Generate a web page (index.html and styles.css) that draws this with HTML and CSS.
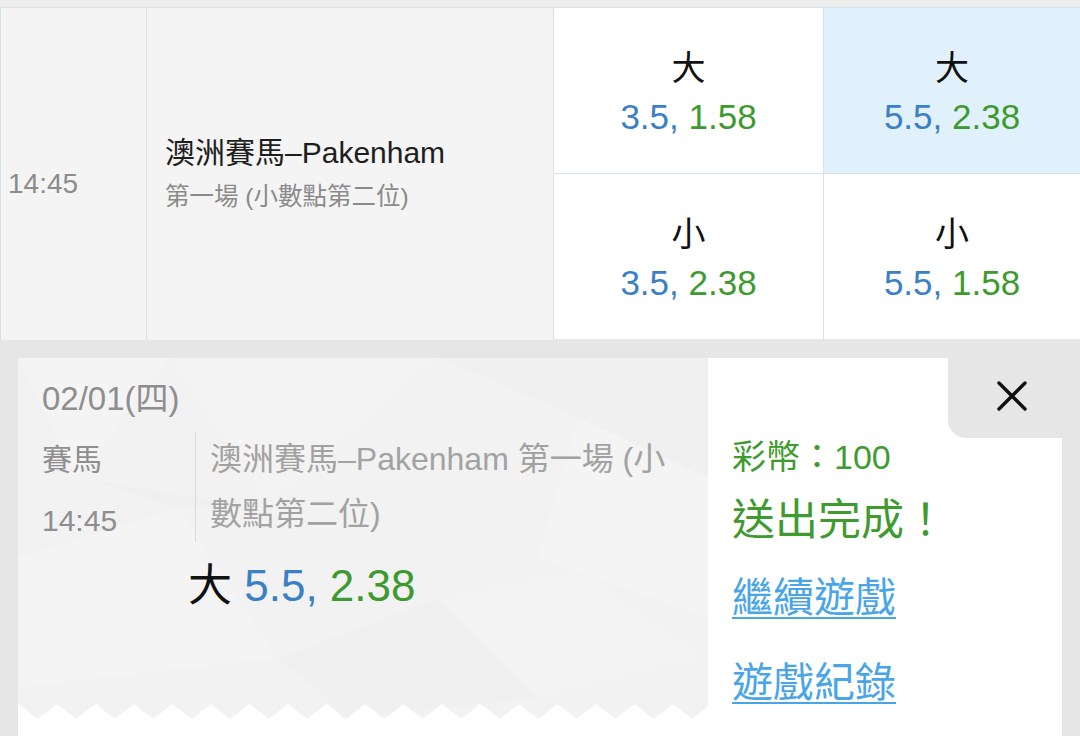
FILE: index.html
```html
<!DOCTYPE html>
<html lang="zh-Hant">
<head>
<meta charset="utf-8">
<title>投注完成</title>
<link rel="stylesheet" href="styles.css">
</head>
<body>
<div class="topstrip"></div>
<div class="row">
  <div class="time">14:45</div>
  <div class="name">
    <div class="title">澳洲賽馬–Pakenham</div>
    <div class="sub">第一場 (小數點第二位)</div>
  </div>
  <div class="odds">
    <div class="cell">
      <div class="lbl">大</div>
      <div class="val"><span class="blue">3.5,</span> <span class="green">1.58</span></div>
    </div>
    <div class="cell">
      <div class="lbl">小</div>
      <div class="val"><span class="blue">3.5,</span> <span class="green">2.38</span></div>
    </div>
  </div>
  <div class="odds last">
    <div class="cell sel">
      <div class="lbl">大</div>
      <div class="val"><span class="blue">5.5,</span> <span class="green">2.38</span></div>
    </div>
    <div class="cell">
      <div class="lbl">小</div>
      <div class="val"><span class="blue">5.5,</span> <span class="green">1.58</span></div>
    </div>
  </div>
</div>

<div class="panel">
  <div class="ticket">
    <svg class="facets" width="690" height="378" viewBox="0 0 690 378" aria-hidden="true">
      <polygon points="0,0 150,0 60,120" fill="#ffffff" fill-opacity="0.18"/>
      <polygon points="150,0 420,0 250,150" fill="#ffffff" fill-opacity="0.14"/>
      <polygon points="420,0 690,0 690,120 560,60" fill="#000000" fill-opacity="0.008"/>
      <polygon points="560,60 690,120 690,260 520,200" fill="#ffffff" fill-opacity="0.16"/>
      <polygon points="0,200 160,150 260,300 0,330" fill="#ffffff" fill-opacity="0.15"/>
      <polygon points="260,300 420,240 520,340 330,360" fill="#000000" fill-opacity="0.008"/>
      <polygon points="420,240 560,210 690,300 520,340" fill="#ffffff" fill-opacity="0.14"/>
      <polygon points="60,120 250,150 160,150" fill="#000000" fill-opacity="0.008"/>
    </svg>
    <div class="tcontent">
      <div class="date">02/01(四)</div>
      <div class="detail">
        <div class="meta">
          <div class="kind">賽馬</div>
          <div class="mtime">14:45</div>
        </div>
        <div class="desc">澳洲賽馬–Pakenham 第一場 (小數點第二位)</div>
      </div>
      <div class="bet"><span class="pick">大</span> <span class="blue">5.5,</span> <span class="green">2.38</span></div>
    </div>
    <svg class="zig" width="690" height="33" viewBox="0 0 690 33" aria-hidden="true">
      <defs>
        <pattern id="zz" x="19.75" y="0" width="38.5" height="16" patternUnits="userSpaceOnUse">
          <polygon points="0,16 19.25,1 38.5,16" fill="#ffffff"/>
        </pattern>
      </defs>
      <rect x="0" y="0" width="690" height="16" fill="url(#zz)"/>
      <rect x="0" y="15.5" width="690" height="18" fill="#ffffff"/>
    </svg>
  </div>
  <div class="result">
    <div class="closebar">
      <div class="close">
        <svg width="32" height="32" viewBox="0 0 32 32" aria-hidden="true">
          <path d="M3 3 L29 29 M29 3 L3 29" stroke="#111111" stroke-width="3.4" stroke-linecap="round" fill="none"/>
        </svg>
      </div>
    </div>
    <div class="coins">彩幣：100</div>
    <div class="done">送出完成！</div>
    <a class="link first" href="#">繼續遊戲</a>
    <a class="link second" href="#">遊戲紀錄</a>
  </div>
</div>
</body>
</html>
```
FILE: styles.css
```css
* {
  box-sizing: border-box;
}

html, body {
  margin: 0;
  padding: 0;
}

body {
  width: 1080px;
  height: 736px;
  overflow: hidden;
  background: #e6e6e6;
  font-family: "Liberation Sans", "Noto Sans CJK TC", sans-serif;
  color: #1a1a1a;
}

.blue {
  color: #3b7fc6;
}

.green {
  color: #3d9a2f;
}

.topstrip {
  height: 8px;
  background: #ececec;
  border-bottom: 1px solid #d5e1eb;
}

.row {
  display: flex;
  height: 332px;
  border-left: 1px solid #d5e1eb;
}

.time {
  width: 146px;
  flex: none;
  background: #f4f4f4;
  border-right: 1px solid #d5e1eb;
  display: flex;
  align-items: center;
  padding: 20px 0 0 7px;
  font-size: 28px;
  color: #8c8c8c;
}

.name {
  width: 407px;
  flex: none;
  background: #f4f4f4;
  border-right: 1px solid #d5e1eb;
  display: flex;
  flex-direction: column;
  justify-content: center;
  padding: 6px 0 0 18px;
}

.title {
  font-size: 30px;
  line-height: 40px;
  color: #1e1e1e;
  word-spacing: 0;
}

.title .dash {
  margin: 0 2px;
}

.sub {
  font-size: 24.5px;
  line-height: 48px;
  color: #8a8a8a;
}

.odds {
  width: 270px;
  flex: none;
  display: flex;
  flex-direction: column;
  border-right: 1px solid #d5e1eb;
}

.odds.last {
  flex: 1;
  border-right: none;
}

.cell {
  height: 166px;
  background: #ffffff;
  display: flex;
  flex-direction: column;
  align-items: center;
  justify-content: center;
  padding-top: 4px;
}

.cell:first-child {
  border-bottom: 1px solid #d5e1eb;
}

.cell:last-child {
  height: 165px;
}

.cell.sel {
  background: #e1f1fb;
}

.lbl {
  font-size: 34px;
  line-height: 48px;
  color: #111111;
}

.val {
  font-size: 35px;
  line-height: 50px;
}

.panel {
  display: flex;
  height: 378px;
  margin: 18px 18px 0 18px;
}

.ticket {
  position: relative;
  width: 690px;
  flex: none;
  display: flex;
  flex-direction: column;
  background: #f2f2f2;
}

.facets {
  position: absolute;
  left: 0;
  top: 0;
}

.tcontent {
  position: relative;
  padding: 21px 28px 0 24px;
}

.date {
  font-size: 33px;
  line-height: 40px;
  color: #8e8e8e;
}

.detail {
  display: flex;
  align-items: flex-start;
  margin-top: 13px;
}

.meta {
  width: 153px;
  flex: none;
  font-size: 30px;
  line-height: 55px;
  color: #8e8e8e;
}

.mtime {
  margin-top: 6px;
}

.desc {
  flex: 1;
  border-left: 1px solid #dadada;
  padding-left: 14px;
  font-size: 32px;
  line-height: 55px;
  color: #a2a2a2;
}

.bet {
  margin-top: 10px;
  padding-left: 146px;
  font-size: 44px;
  line-height: 56px;
}

.pick {
  color: #111111;
}

.zig {
  position: relative;
  display: block;
  margin-top: auto;
}

.result {
  flex: 1;
  background: #ffffff;
  display: flex;
  flex-direction: column;
  align-items: flex-start;
  padding-left: 24px;
}

.closebar {
  align-self: stretch;
  display: flex;
  justify-content: flex-end;
  height: 80px;
  margin-left: -24px;
}

.close {
  width: 114px;
  height: 80px;
  background: #e6e6e6;
  border-bottom-left-radius: 18px;
  display: flex;
  align-items: center;
  justify-content: center;
  padding: 0 0 4px 14px;
}

.close svg {
  display: block;
}

.coins {
  font-size: 34px;
  line-height: 38px;
  color: #3f9b30;
}

.done {
  font-size: 43px;
  line-height: 88px;
  color: #3f9b30;
}

.link {
  display: block;
  font-size: 41px;
  line-height: 56px;
  color: #4aa5e8;
  text-decoration: underline;
  text-decoration-thickness: 2px;
  text-underline-offset: 5px;
}

.link.first {
  margin-top: 6px;
}

.link.second {
  margin-top: 29px;
}
```
